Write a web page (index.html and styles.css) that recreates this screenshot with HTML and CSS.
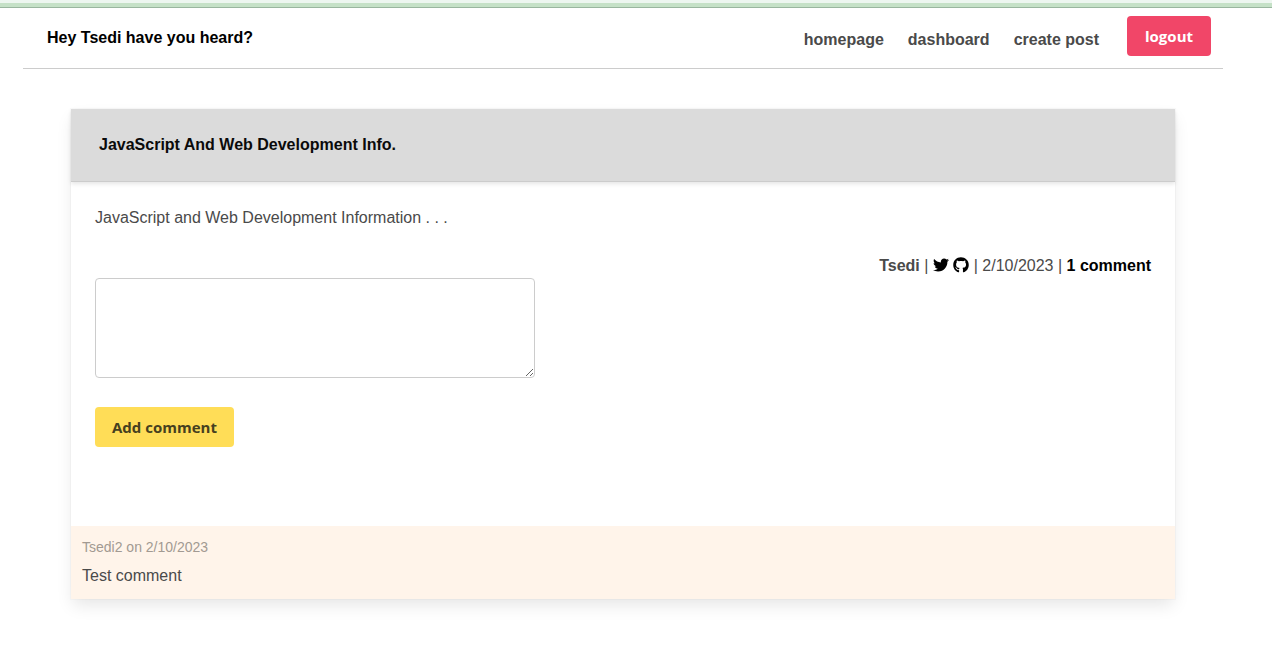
FILE: index.html
```html
<!DOCTYPE html>
<html lang="en">
<head>
<meta charset="utf-8">
<meta name="viewport" content="width=device-width, initial-scale=1">
<title>Have you heard?</title>
<link rel="stylesheet" href="styles.css">
</head>
<body>
<div class="top-strip"></div>
<div class="page">
  <header class="site-header">
    <h1 class="brand"><a href="#">Hey Tsedi have you heard?</a></h1>
    <nav class="nav">
      <a href="#">homepage</a>
      <a href="#">dashboard</a>
      <a href="#">create post</a>
      <button class="button logout" type="button">logout</button>
    </nav>
  </header>
  <main>
    <article class="card">
      <header class="card-header"><h2 class="card-title">JavaScript And Web Development Info.</h2></header>
      <div class="card-content">
        <p class="post-text">JavaScript and Web Development Information . . .</p>
        <p class="meta">
          <strong>Tsedi</strong> |
          <a href="#" aria-label="Twitter"><svg class="icon" viewBox="0 0 512 512"><path d="M459.37 151.716c.325 4.548.325 9.097.325 13.645 0 138.72-105.583 298.558-298.558 298.558-59.452 0-114.68-17.219-161.137-47.106 8.447.974 16.568 1.299 25.34 1.299 49.055 0 94.213-16.568 130.274-44.832-46.132-.975-84.792-31.188-98.112-72.772 6.498.974 12.995 1.624 19.818 1.624 9.421 0 18.843-1.3 27.614-3.573-48.081-9.747-84.143-51.98-84.143-102.985v-1.299c13.969 7.797 30.214 12.67 47.431 13.319-28.264-18.843-46.781-51.005-46.781-87.391 0-19.492 5.197-37.36 14.294-52.954 51.655 63.675 129.3 105.258 216.365 109.807-1.624-7.797-2.599-15.918-2.599-24.04 0-57.828 46.782-104.934 104.934-104.934 30.213 0 57.502 12.67 76.67 33.137 23.715-4.548 46.456-13.32 66.599-25.34-7.798 24.366-24.366 44.833-46.132 57.827 21.117-2.273 41.584-8.122 60.426-16.243-14.292 20.791-32.161 39.308-52.628 54.253z"/></svg></a>
          <a href="#" aria-label="GitHub"><svg class="icon" viewBox="0 0 496 512"><path d="M165.9 397.400c0 2-2.300 3.600-5.200 3.600-3.300.3-5.600-1.300-5.600-3.600 0-2 2.300-3.600 5.200-3.600 3-.3 5.600 1.300 5.600 3.600zM244.800 8C106.100 8 0 113.300 0 252c0 110.900 69.800 205.800 169.500 239.200 12.800 2.300 17.300-5.600 17.300-12.100 0-6.200-.3-40.400-.3-61.400 0 0-70 15-84.700-29.800 0 0-11.400-29.100-27.800-36.600 0 0-22.900-15.700 1.600-15.400 0 0 24.900 2 38.600 25.800 21.900 38.600 58.600 27.500 72.900 20.900 2.300-16 8.800-27.100 16-33.700-55.900-6.200-112.300-14.300-112.300-110.500 0-27.500 7.600-41.300 23.600-58.900-2.600-6.500-11.100-33.300 2.600-67.900 20.900-6.500 69 27 69 27 20-5.600 41.500-8.500 62.800-8.500s42.800 2.900 62.800 8.500c0 0 48.100-33.600 69-27 13.700 34.700 5.200 61.400 2.600 67.900 16 17.700 25.800 31.500 25.800 58.900 0 96.500-58.900 104.200-114.800 110.500 9.200 7.900 17 22.900 17 46.400 0 33.700-.3 75.400-.3 83.600 0 6.500 4.600 14.400 17.300 12.100C428.200 457.800 496 362.900 496 252 496 113.300 383.500 8 244.800 8z"/></svg></a>
          | 2/10/2023 | <a class="comment-count" href="#">1 comment</a>
        </p>
        <form class="comment-form">
          <textarea class="textarea" aria-label="Comment"></textarea>
          <button class="button add" type="button">Add comment</button>
        </form>
      </div>
      <section class="comment">
        <p class="comment-meta">Tsedi2 on 2/10/2023</p>
        <p class="comment-text">Test comment</p>
      </section>
    </article>
  </main>
</div>
</body>
</html>
```
FILE: styles.css
```css
* {
  box-sizing: border-box;
}

body,
h1,
h2,
p {
  margin: 0;
}

body {
  background: #fff;
  color: #4a4a4a;
  font: 16px/24px "Liberation Sans", Arial, sans-serif;
}

a {
  color: #000;
  text-decoration: none;
}

.top-strip {
  height: 8px;
  background: #c5e1c7;
  border-top: 3px solid #edf6f0;
  border-bottom: 1px solid #99b69f;
}

.page {
  padding: 0 49px 0 23px;
}

.site-header {
  display: flex;
  justify-content: space-between;
  padding: 8px 12px 12px 24px;
  border-bottom: 1px solid #ccc;
}

.brand {
  padding-top: 10px;
  font-size: 16px;
  line-height: 24px;
}

.nav {
  display: flex;
  align-items: center;
  gap: 24px;
  font-weight: 700;
}

.nav a {
  padding-top: 8px;
  color: #4a4a4a;
}

.button {
  min-width: 84px;
  height: 40px;
  padding: 0 17px;
  border: 0;
  border-radius: 4px;
  font: 700 15px/24px "Open Sans", "Noto Sans", sans-serif;
  cursor: pointer;
}

.logout {
  margin-left: 4px;
  background: #f14668;
  color: #fff;
}

main {
  padding: 40px 48px;
}

.card {
  background: #fff;
  box-shadow: 0 8px 16px -2px rgba(10, 10, 10, 0.1), 0 0 0 1px rgba(10, 10, 10, 0.02);
}

.card-header {
  padding: 24px 28px;
  background: #dbdbdb;
  box-shadow: 0 2px 4px rgba(10, 10, 10, 0.1);
  border-bottom: 1px solid #ccc;
}

.card-title {
  color: #0a0a0a;
  font-size: 16px;
  line-height: 24px;
}

.card-content {
  padding: 24px 24px 79px;
}

.meta {
  margin-top: 24px;
  text-align: right;
}

.icon {
  width: 16px;
  height: 16px;
  vertical-align: -2px;
}

.comment-count {
  font-weight: 700;
}

.comment-form {
  display: flex;
  flex-direction: column;
  align-items: flex-start;
  gap: 29px;
}

.textarea {
  width: calc(100% * 5 / 12);
  min-width: 240px;
  height: 100px;
  padding: 12px;
  border: 1px solid #ccc;
  border-radius: 4px;
  background: #fff;
  color: inherit;
  font: inherit;
  resize: vertical;
}

.add {
  background: #ffdd57;
  color: #46401f;
}

.comment {
  padding: 9px 11px 11px;
  background: #fff4ea;
}

.comment-meta {
  color: #a29a92;
  font-size: 14px;
}

.comment-text {
  margin-top: 5px;
}
```
